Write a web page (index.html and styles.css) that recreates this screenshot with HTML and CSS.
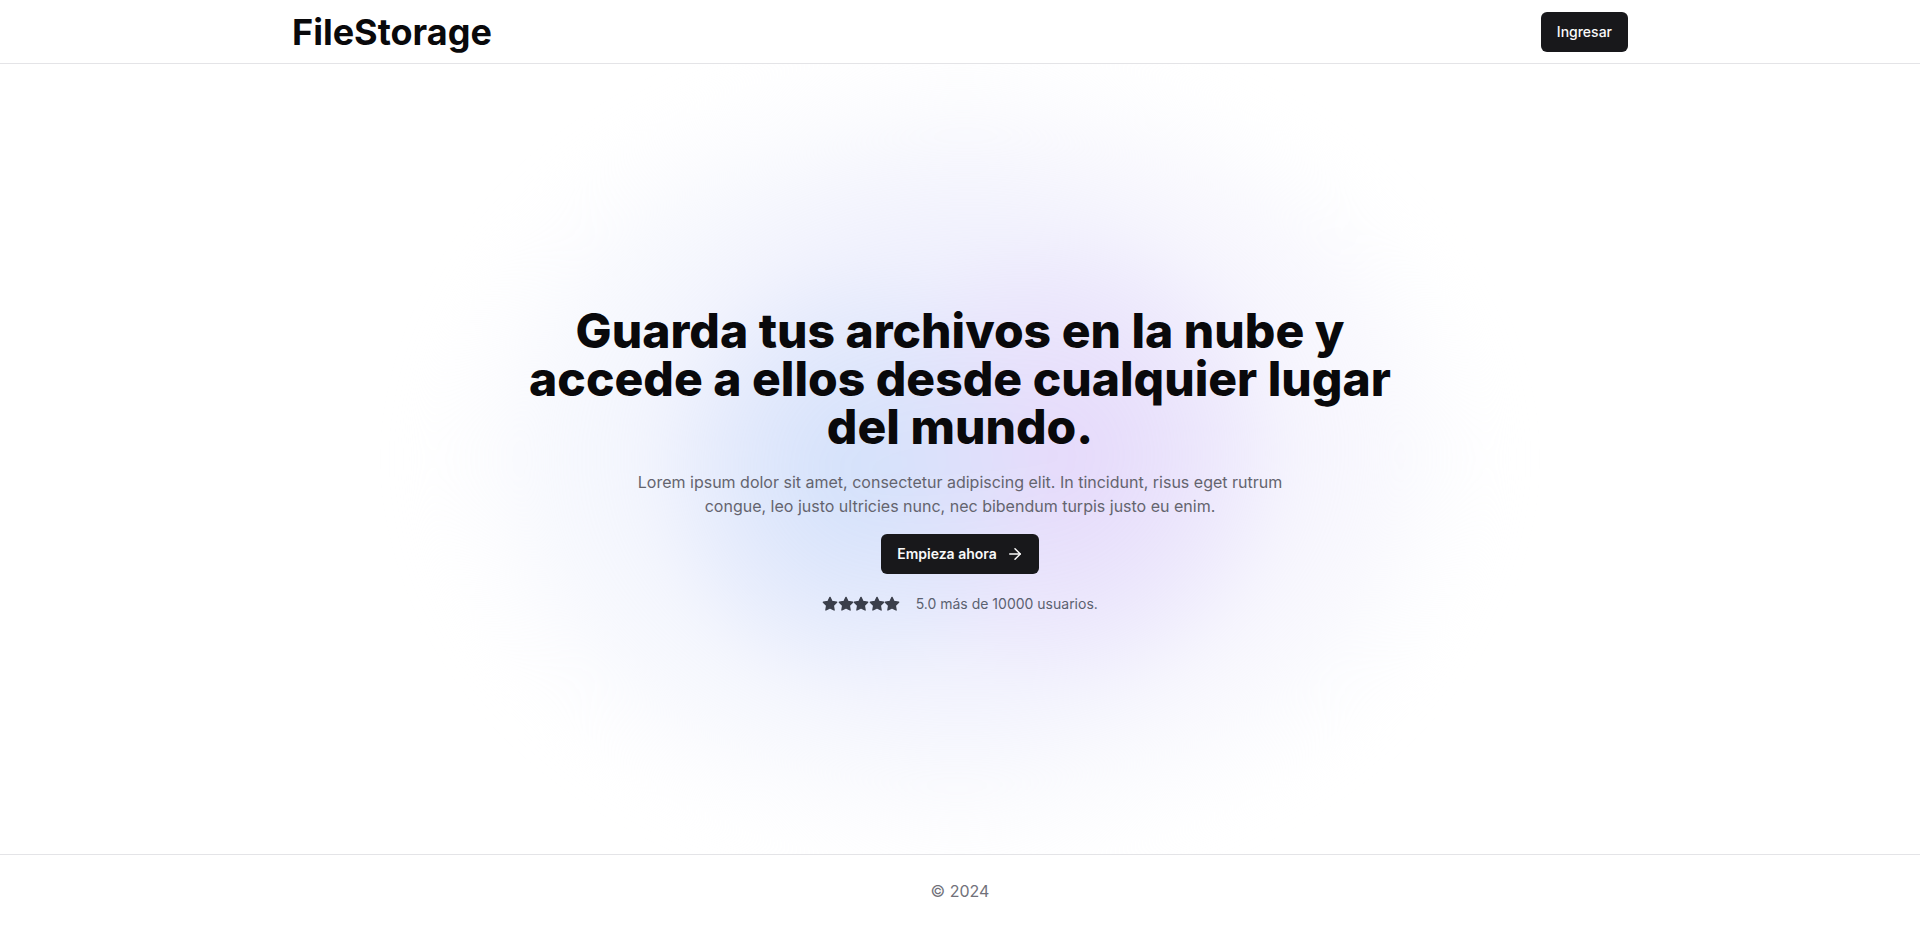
FILE: index.html
```html
<!DOCTYPE html>
<html lang="es">
<head>
<meta charset="utf-8">
<title>FileStorage</title>
<link rel="stylesheet" href="styles.css">
</head>
<body>
<header class="site-header">
  <div class="container header-inner">
    <a class="logo" href="#">FileStorage</a>
    <a class="btn btn-sm" href="#">Ingresar</a>
  </div>
</header>
<main class="hero">
  <div class="glow" aria-hidden="true"></div>
  <div class="hero-content">
    <h1 class="hero-title">Guarda tus archivos en la nube y accede a ellos desde cualquier lugar del mundo.</h1>
    <p class="hero-text">Lorem ipsum dolor sit amet, consectetur adipiscing elit. In tincidunt, risus eget rutrum congue, leo justo ultricies nunc, nec bibendum turpis justo eu enim.</p>
    <a class="btn btn-cta" href="#">Empieza ahora
      <svg class="arrow" width="18" height="18" viewBox="0 0 24 24" fill="none" stroke="currentColor" stroke-width="2" stroke-linecap="round" stroke-linejoin="round"><path d="M5 12h14"/><path d="m12 5 7 7-7 7"/></svg>
    </a>
    <div class="rating">
      <div class="stars">
        <svg viewBox="0 0 24 24"><polygon points="12 2 15.09 8.26 22 9.27 17 14.14 18.18 21.02 12 17.77 5.82 21.02 7 14.14 2 9.27 8.91 8.26 12 2"/></svg>
        <svg viewBox="0 0 24 24"><polygon points="12 2 15.09 8.26 22 9.27 17 14.14 18.18 21.02 12 17.77 5.82 21.02 7 14.14 2 9.27 8.91 8.26 12 2"/></svg>
        <svg viewBox="0 0 24 24"><polygon points="12 2 15.09 8.26 22 9.27 17 14.14 18.18 21.02 12 17.77 5.82 21.02 7 14.14 2 9.27 8.91 8.26 12 2"/></svg>
        <svg viewBox="0 0 24 24"><polygon points="12 2 15.09 8.26 22 9.27 17 14.14 18.18 21.02 12 17.77 5.82 21.02 7 14.14 2 9.27 8.91 8.26 12 2"/></svg>
        <svg viewBox="0 0 24 24"><polygon points="12 2 15.09 8.26 22 9.27 17 14.14 18.18 21.02 12 17.77 5.82 21.02 7 14.14 2 9.27 8.91 8.26 12 2"/></svg>
      </div>
      <span class="rating-text">5.0 más de 10000 usuarios.</span>
    </div>
  </div>
</main>
<footer class="site-footer">
  <p>© 2024</p>
</footer>
</body>
</html>
```

FILE: styles.css
```css
* { box-sizing: border-box; }
html, body { margin: 0; padding: 0; }
body {
  font-family: Inter, "Noto Sans", "Liberation Sans", sans-serif;
  color: #09090b;
  background: #ffffff;
  min-height: 100vh;
  display: flex;
  flex-direction: column;
}
a { text-decoration: none; color: inherit; }

.container {
  max-width: 1400px;
  margin: 0 auto;
  padding: 0 32px;
  width: 100%;
}

.site-header {
  border-bottom: 1px solid #e4e4e7;
  position: relative;
  z-index: 2;
}
.header-inner {
  height: 63px;
  display: flex;
  align-items: center;
  justify-content: space-between;
}
.logo {
  font-size: 36px;
  font-weight: 700;
  line-height: 40px;
  color: #09090b;
}

.btn {
  display: inline-flex;
  align-items: center;
  justify-content: center;
  background: #18181b;
  color: #fafafa;
  font-size: 14px;
  font-weight: 500;
  border-radius: 6px;
  line-height: 20px;
}
.btn-sm {
  height: 40px;
  padding: 0 16px;
  margin-top: 1px;
}

.hero {
  flex: 1;
  position: relative;
  overflow: hidden;
  display: flex;
  align-items: center;
  justify-content: center;
}
.glow {
  position: absolute;
  left: 50%;
  top: 50%;
  width: 1100px;
  height: 840px;
  transform: translate(-50%, -50%);
  border-radius: 50%;
  background:
    radial-gradient(ellipse 200px 220px at 40% 52%, rgba(205, 222, 250, 0.75), rgba(205, 222, 250, 0) 100%),
    radial-gradient(ellipse 220px 240px at 60% 50%, rgba(228, 212, 250, 0.75), rgba(228, 212, 250, 0) 100%),
    radial-gradient(ellipse 420px 340px at 45% 50%, rgba(220, 230, 252, 0.55), rgba(225, 232, 252, 0) 100%),
    radial-gradient(ellipse 420px 340px at 56% 48%, rgba(236, 224, 252, 0.55), rgba(236, 224, 252, 0) 100%),
    radial-gradient(closest-side, rgba(240, 242, 252, 0.75), rgba(246, 247, 253, 0.55) 78%, rgba(255, 255, 255, 0) 100%);
  filter: blur(20px);
}
.hero-content {
  position: relative;
  z-index: 1;
  max-width: 896px;
  display: flex;
  flex-direction: column;
  align-items: center;
  text-align: center;
  margin-top: 3px;
}
.hero-title {
  margin: 0;
  font-size: 48px;
  line-height: 48px;
  font-weight: 800;
  letter-spacing: 0;
  color: #09090b;
}
.hero-text {
  margin: 19px 0 0;
  max-width: 672px;
  font-size: 16px;
  line-height: 24px;
  color: #64646e;
}
.btn-cta {
  margin-top: 16px;
  height: 40px;
  padding: 0 15px 0 16px;
  gap: 9px;
  font-weight: 600;
}
.arrow { display: block; }

.rating {
  margin-top: 20px;
  display: flex;
  align-items: center;
  gap: 16px;
}
.stars {
  display: flex;
}
.stars svg {
  width: 16px;
  height: 16px;
  fill: #3b3f4b;
  stroke: #3b3f4b;
  stroke-width: 2;
  stroke-linejoin: round;
  display: block;
  margin-right: -0.5px;
}
.rating-text {
  font-size: 14px;
  line-height: 20px;
  color: #5b6170;
}

.site-footer {
  border-top: 1px solid #e4e4e7;
  text-align: center;
  position: relative;
  z-index: 2;
}
.site-footer p {
  margin: 0;
  padding: 24px 0;
  font-size: 16px;
  line-height: 24px;
  color: #71717a;
}
```
